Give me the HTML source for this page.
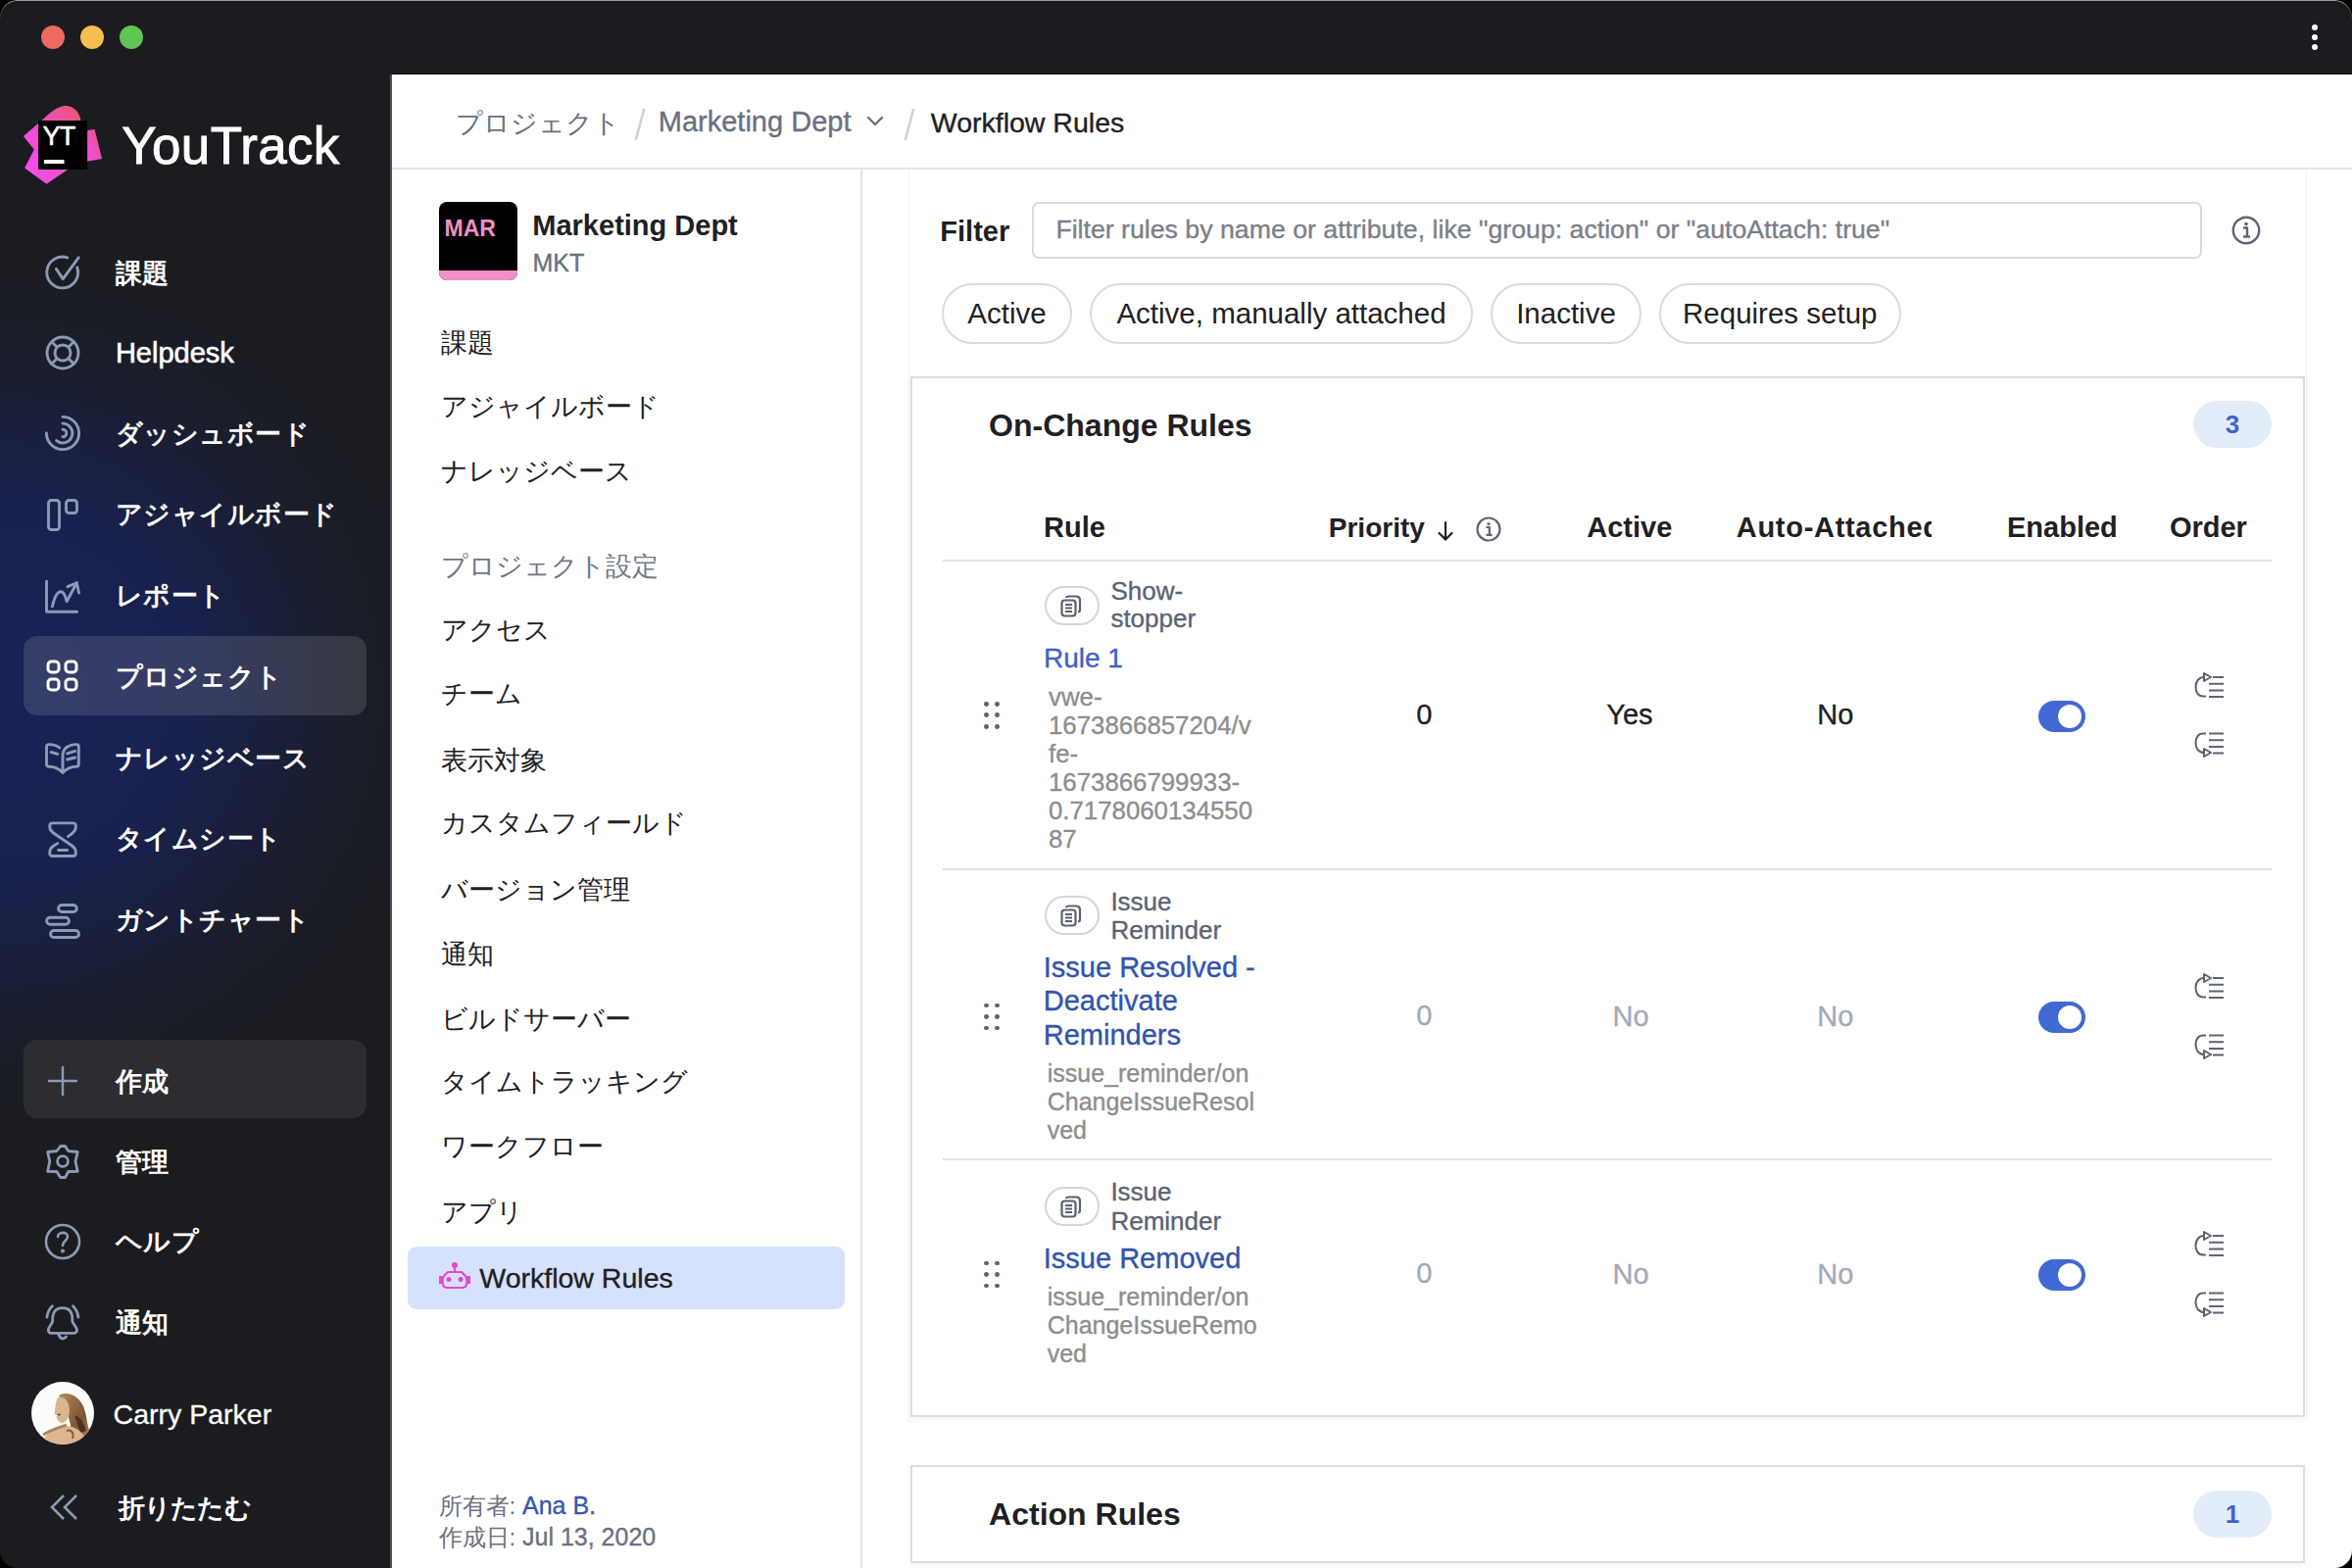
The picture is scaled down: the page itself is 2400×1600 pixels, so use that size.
<!DOCTYPE html><html><head><meta charset="utf-8"><style>
html,body{margin:0;padding:0;width:2400px;height:1600px;overflow:hidden;background:#000;}
body{font-family:"Liberation Sans",sans-serif;}
#win{position:absolute;left:0;top:0;width:2400px;height:1600px;border-radius:18px;overflow:hidden;background:#1b1c1f;}
.t{position:absolute;white-space:nowrap;}
.r{position:absolute;}
</style></head><body><div id="win">
<div class="r" style="left:0px;top:76px;width:400px;height:1524px;background:radial-gradient(ellipse 470px 460px at 0px 630px, rgba(24,34,86,1) 0%, rgba(24,34,84,0.88) 42%, rgba(26,30,54,0.4) 78%, rgba(27,28,31,0) 100%);"></div>
<div class="r" style="left:0px;top:0px;width:2400px;height:1600px;border-radius:18px;box-shadow:inset 0 1px 0 0 rgba(200,200,200,0.75);pointer-events:none;z-index:5;"></div>
<div class="r" style="left:42px;top:26px;width:24px;height:24px;border-radius:50%;background:#ee6a5e;"></div>
<div class="r" style="left:82px;top:26px;width:24px;height:24px;border-radius:50%;background:#f5be4f;"></div>
<div class="r" style="left:122px;top:26px;width:24px;height:24px;border-radius:50%;background:#61c554;"></div>
<div class="r" style="left:2359px;top:25px;width:6px;height:6px;border-radius:50%;background:#fff;"></div>
<div class="r" style="left:2359px;top:35px;width:6px;height:6px;border-radius:50%;background:#fff;"></div>
<div class="r" style="left:2359px;top:45px;width:6px;height:6px;border-radius:50%;background:#fff;"></div>
<svg class="r" style="left:20px;top:100px;" width="90" height="95" viewBox="0 0 90 95">
<defs><linearGradient id="lg" x1="0" y1="0.8" x2="1" y2="0.2"><stop offset="0" stop-color="#f64cf6"/><stop offset="0.6" stop-color="#ec50b8"/><stop offset="1" stop-color="#ea5676"/></linearGradient></defs>
<path d="M3.9 39 L23 22.4 C31 15 39 8.5 46 8 C54 7.5 61 13 62.5 23 L62 73 L49.2 73.1 L27.5 87.8 L5.2 71.5 L14.8 52.4 Z" fill="url(#lg)"/>
<path d="M62 33.9 L76.6 32 L84 62 L62 66 Z" fill="url(#lg)"/>
<rect x="19.1" y="23" width="50" height="50" fill="#000"/>
<text x="23.5" y="48" font-family="Liberation Sans" font-size="27" font-weight="400" fill="#fff" stroke="#fff" stroke-width="0.6" letter-spacing="-0.8">YT</text>
<rect x="24.9" y="63" width="20.6" height="4" fill="#fff"/>
</svg>
<div class="t" style="left:124.3px;top:122.0px;font-size:53px;line-height:53px;font-weight:400;color:#ffffff;letter-spacing:0.3px;-webkit-text-stroke:0.9px #fff;">YouTrack</div>
<div class="r" style="left:24px;top:649px;width:350px;height:81px;border-radius:14px;background:rgba(255,255,255,0.125);"></div>
<div class="r" style="left:24px;top:1061px;width:350px;height:80px;border-radius:14px;background:#2c2d31;"></div>
<div class="t" style="left:117.5px;top:265.6px;font-size:27px;line-height:27px;font-weight:700;color:#ffffff;letter-spacing:0.5px;">課題</div>
<div class="t" style="left:117.9px;top:345.9px;font-size:29px;line-height:29px;font-weight:400;color:#ffffff;-webkit-text-stroke:0.6px #fff;">Helpdesk</div>
<div class="t" style="left:117.5px;top:429.6px;font-size:27px;line-height:27px;font-weight:700;color:#ffffff;letter-spacing:0.5px;">ダッシュボード</div>
<div class="t" style="left:117.5px;top:512.1px;font-size:27px;line-height:27px;font-weight:700;color:#ffffff;letter-spacing:0.5px;">アジャイルボード</div>
<div class="t" style="left:117.5px;top:594.6px;font-size:27px;line-height:27px;font-weight:700;color:#ffffff;letter-spacing:0.5px;">レポート</div>
<div class="t" style="left:117.5px;top:678.1px;font-size:27px;line-height:27px;font-weight:700;color:#ffffff;letter-spacing:0.5px;">プロジェクト</div>
<div class="t" style="left:117.5px;top:760.6px;font-size:27px;line-height:27px;font-weight:700;color:#ffffff;letter-spacing:0.5px;">ナレッジベース</div>
<div class="t" style="left:117.5px;top:843.1px;font-size:27px;line-height:27px;font-weight:700;color:#ffffff;letter-spacing:0.5px;">タイムシート</div>
<div class="t" style="left:117.5px;top:926.1px;font-size:27px;line-height:27px;font-weight:700;color:#ffffff;letter-spacing:0.5px;">ガントチャート</div>
<div class="t" style="left:117.5px;top:1090.6px;font-size:27px;line-height:27px;font-weight:700;color:#ffffff;letter-spacing:0.5px;">作成</div>
<div class="t" style="left:117.5px;top:1173.1px;font-size:27px;line-height:27px;font-weight:700;color:#ffffff;letter-spacing:0.5px;">管理</div>
<div class="t" style="left:117.5px;top:1254.1px;font-size:27px;line-height:27px;font-weight:700;color:#ffffff;letter-spacing:0.5px;">ヘルプ</div>
<div class="t" style="left:117.5px;top:1336.6px;font-size:27px;line-height:27px;font-weight:700;color:#ffffff;letter-spacing:0.5px;">通知</div>
<svg class="r" style="left:44px;top:258px;" width="40" height="40" viewBox="0 0 40 40"><g fill="none" stroke="#8c9bb5" stroke-width="2.9" stroke-linecap="round" stroke-linejoin="round"><path d="M24.7 4.9 A15.9 15.9 0 1 0 34.7 14.8"/><path d="M13.4 16.4 L20.2 26.6 L36.2 4.8"/></g></svg>
<svg class="r" style="left:44px;top:340px;" width="40" height="40" viewBox="0 0 40 40"><g fill="none" stroke="#8c9bb5" stroke-width="2.9" stroke-linecap="round" stroke-linejoin="round"><circle cx="20" cy="20" r="16"/><circle cx="20" cy="20" r="8"/><path d="M14.3 14.3 L8.7 8.7 M25.7 14.3 L31.3 8.7 M14.3 25.7 L8.7 31.3 M25.7 25.7 L31.3 31.3"/></g></svg>
<svg class="r" style="left:44px;top:422px;" width="40" height="40" viewBox="0 0 40 40"><g fill="none" stroke="#8c9bb5" stroke-width="2.9" stroke-linecap="round" stroke-linejoin="round"><path d="M20 3.4 A16.6 16.6 0 1 1 3.4 20"/><path d="M20 10.1 A9.9 9.9 0 1 1 13.6 27.6"/><path d="M20 16.2 A3.8 3.8 0 1 1 20 23.8"/></g></svg>
<svg class="r" style="left:44px;top:504.5px;" width="40" height="40" viewBox="0 0 40 40"><g fill="none" stroke="#8c9bb5" stroke-width="2.9" stroke-linecap="round" stroke-linejoin="round"><rect x="5.5" y="5.5" width="11" height="30" rx="3"/><rect x="23.5" y="5.5" width="11" height="13" rx="3"/></g></svg>
<svg class="r" style="left:44px;top:588px;" width="40" height="40" viewBox="0 0 40 40"><g fill="none" stroke="#8c9bb5" stroke-width="2.9" stroke-linecap="round" stroke-linejoin="round"><path d="M3.5 5.2 L3.5 36.3 L34.6 36.3"/><path d="M9.4 30.8 C11 24 14 15.8 18 15.8 C22 15.8 23 22 24.1 25.7 L34.3 6.8"/><path d="M25 10.7 L34.3 6.8 L36.5 17"/></g></svg>
<svg class="r" style="left:44px;top:670px;" width="40" height="40" viewBox="0 0 40 40"><g fill="none" stroke="#ffffff" stroke-width="3" stroke-linecap="round" stroke-linejoin="round"><rect x="5" y="5" width="11" height="11" rx="3.5"/><rect x="23" y="5" width="11" height="11" rx="3.5"/><rect x="5" y="23" width="11" height="11" rx="3.5"/><rect x="23" y="23" width="11" height="11" rx="3.5"/></g></svg>
<svg class="r" style="left:44px;top:753px;" width="40" height="40" viewBox="0 0 40 40"><g fill="none" stroke="#8c9bb5" stroke-width="2.9" stroke-linecap="round" stroke-linejoin="round"><path d="M16.7 10 C14 7.7 9 6.6 6 6.6 C4.5 6.6 3.5 7.6 3.5 9 L3.5 27 C3.5 28.5 4.5 29.2 6 29.2 C11 29.2 16 31 20 35.6 C24 31 29 29.2 34 29.2 C35.5 29.2 36.3 28.5 36.3 27 L36.3 9 C36.3 7.6 35.5 6.6 34 6.6 C27 6.6 20 10 20 18 L20 33"/><path d="M8.1 14.5 L14.8 16.4 M24.6 15.9 L32.7 13.4 M24.6 22 L32.7 20"/></g></svg>
<svg class="r" style="left:44px;top:836px;" width="40" height="40" viewBox="0 0 40 40"><g fill="none" stroke="#8c9bb5" stroke-width="2.9" stroke-linecap="round" stroke-linejoin="round"><path d="M25.4 17.6 L29.5 14.5 C32 12.5 33.3 10.5 33.3 8 L33.3 6.5 C33.3 4.8 32.3 3.9 30.5 3.9 L9.6 3.9 C7.8 3.9 6.8 4.8 6.8 6.5 L6.8 8 C6.8 10.5 7.8 12 10.5 14 L29.5 27 C32 28.8 33.3 31 33.3 33.5 L33.3 34.8 C33.3 36.5 32.3 37.5 30.5 37.5 L9.6 37.5 C7.8 37.5 6.8 36.5 6.8 34.8 L6.8 33.5 C6.8 31 8 29 10.5 27.3 L14.7 24.6"/><path d="M15.5 31.5 L24.6 31.5"/></g></svg>
<svg class="r" style="left:44px;top:919px;" width="40" height="40" viewBox="0 0 40 40"><g fill="none" stroke="#8c9bb5" stroke-width="2.9" stroke-linecap="round" stroke-linejoin="round"><rect x="15.6" y="4.5" width="18.7" height="7" rx="3.5"/><rect x="3.6" y="17.3" width="22.8" height="7" rx="3.5"/><rect x="7.5" y="30.5" width="29" height="7" rx="3.5"/></g></svg>
<svg class="r" style="left:44px;top:1083px;" width="40" height="40" viewBox="0 0 40 40"><g fill="none" stroke="#8c9bb5" stroke-width="2.4" stroke-linecap="round" stroke-linejoin="round"><path d="M20 6 L20 34 M6 20 L34 20"/></g></svg>
<svg class="r" style="left:44px;top:1164.5px;" width="40" height="40" viewBox="0 0 40 40"><g fill="none" stroke="#8c9bb5" stroke-width="2.8" stroke-linecap="round" stroke-linejoin="round"><path d="M17.7 4.5 L22.5 4.5 L25.7 9.5 L35.2 10.5 L33 20.1 L35.2 30.3 L25.7 30.5 L22.5 36.5 L17.7 36.5 L13.9 30.5 L4.6 30.3 L6.8 20.1 L4.6 10.5 L13.9 9.5 Z"/><circle cx="20" cy="20" r="5.4"/></g></svg>
<svg class="r" style="left:44px;top:1246.5px;" width="40" height="40" viewBox="0 0 40 40"><g fill="none" stroke="#8c9bb5" stroke-width="2.6" stroke-linecap="round" stroke-linejoin="round"><circle cx="20" cy="20" r="17"/><path d="M15 15 C15 10 25 9 25 15 C25 19 20 19 20 24"/><circle cx="20" cy="29.5" r="0.8" fill="#8c9bb5"/></g></svg>
<svg class="r" style="left:44px;top:1329px;" width="40" height="40" viewBox="0 0 40 40"><g fill="none" stroke="#8c9bb5" stroke-width="2.8" stroke-linecap="round" stroke-linejoin="round"><path d="M9.7 17 C9.7 9 14 5.6 19.7 5.6 C25.5 5.6 29.8 9 29.8 17 L29.8 19 C29.8 21 34.5 25.5 34.5 28 C34.5 30 33 31.4 31 31.4 L8.5 31.4 C6.5 31.4 5.3 30 5.3 28 C5.3 25.5 9.7 21 9.7 19 Z"/><path d="M15.5 31.5 C16.5 35 18 37 20 37 C21.5 37 22.5 36 23.5 35"/><path d="M9.4 3.8 C6.5 6.5 4.5 10 3.9 15 M30.4 3.8 C33.3 6.5 35.3 10 35.9 15"/></g></svg>
<svg class="r" style="left:50px;top:1524px;" width="32" height="28" viewBox="0 0 32 28"><g fill="none" stroke="#8c9bb5" stroke-width="2.6"><path d="M15 2 L3 14 L15 26"/><path d="M28 2 L16 14 L28 26"/></g></svg>
<div class="t" style="left:120.5px;top:1526.1px;font-size:27px;line-height:27px;font-weight:700;color:#ffffff;letter-spacing:-0.7px;">折りたたむ</div>
<svg class="r" style="left:32px;top:1410px;" width="64" height="64" viewBox="0 0 64 64"><defs><clipPath id="av"><circle cx="32" cy="32" r="32"/></clipPath>
<linearGradient id="hair" x1="0" y1="0" x2="1" y2="1"><stop offset="0" stop-color="#b08a60"/><stop offset="0.6" stop-color="#7a5535"/><stop offset="1" stop-color="#c09060"/></linearGradient></defs>
<g clip-path="url(#av)"><rect width="64" height="64" fill="#fcfcfc"/>
<path d="M28 14 C34 10 44 12 50 20 C56 28 56 38 58 46 C60 52 63 58 61 64 L42 64 L40 44 C38 36 36 26 28 14 Z" fill="url(#hair)"/>
<path d="M44 34 C50 36 54 42 56 50 L50 52 C48 46 46 40 44 34 Z" fill="#4a3222"/>
<path d="M27 16 C33 14 39 20 39 29 C39 37 35 42 31 42 C27 41 25 37 26 34 L23.5 33 C24.5 29 24 22 27 16 Z" fill="#dcb48e"/>
<path d="M26 33 L30 32.5 L29 35 Z" fill="#6a3a2a"/>
<path d="M10 64 C14 52 24 45 34 45 C46 45 54 52 58 64 Z" fill="#dcb690"/>
<path d="M36 44 C30 46 20 49 12 54" stroke="#a88a58" stroke-width="3" fill="none"/>
<path d="M36 50 C40 48 44 52 42 58" stroke="#8a5a3a" stroke-width="2" fill="none"/>
</g></svg>
<div class="t" style="left:115.6px;top:1428.8px;font-size:28.5px;line-height:28.5px;font-weight:400;color:#ffffff;-webkit-text-stroke:0.3px #fff;">Carry Parker</div>
<div class="r" style="left:398px;top:76px;width:2px;height:1524px;background:#4e5056;"></div>
<div class="r" style="left:400px;top:76px;width:2000px;height:1524px;background:#ffffff;"></div>
<div class="r" style="left:400px;top:75px;width:2000px;height:1px;background:#08090c;"></div>
<div class="r" style="left:400px;top:171px;width:2000px;height:2px;background:#e3e4e8;"></div>
<div class="r" style="left:878px;top:173px;width:2px;height:1427px;background:#e3e4e8;"></div>
<div class="r" style="left:927px;top:173px;width:1px;height:1278px;background:#f5f5f7;"></div>
<div class="r" style="left:2353px;top:173px;width:1px;height:1278px;background:#f3f3f5;"></div>
<div class="t" style="left:465.0px;top:112.6px;font-size:27px;line-height:27px;font-weight:400;color:#6b7080;">プロジェクト</div>
<svg class="r" style="left:645px;top:110px;" width="16" height="34" viewBox="0 0 16 34"><path d="M12 2 L4 32" stroke="#d0d2d8" stroke-width="2.6" stroke-linecap="round"/></svg>
<div class="t" style="left:671.8px;top:110.3px;font-size:29px;line-height:29px;font-weight:400;color:#6b7080;-webkit-text-stroke:0.35px #6b7080;">Marketing Dept</div>
<svg class="r" style="left:883px;top:116px;" width="20" height="16" viewBox="0 0 20 16"><path d="M3 4 L10 11 L17 4" fill="none" stroke="#6b7080" stroke-width="2.4" stroke-linecap="round" stroke-linejoin="round"/></svg>
<svg class="r" style="left:920px;top:110px;" width="16" height="34" viewBox="0 0 16 34"><path d="M12 2 L4 32" stroke="#d0d2d8" stroke-width="2.6" stroke-linecap="round"/></svg>
<div class="t" style="left:949.8px;top:110.8px;font-size:28.5px;line-height:28.5px;font-weight:400;color:#1f2023;-webkit-text-stroke:0.35px #1f2023;">Workflow Rules</div>
<div class="r" style="left:448px;top:206px;width:80px;height:80px;border-radius:8px;background:#000;overflow:hidden;"></div>
<div class="r" style="left:448px;top:276px;width:80px;height:10px;border-radius:0 0 8px 8px;background:#f090c6;"></div>
<div class="t" style="left:453.6px;top:221.6px;font-size:23px;line-height:23px;font-weight:700;color:#f090c6;">MAR</div>
<div class="t" style="left:543.3px;top:216.3px;font-size:29px;line-height:29px;font-weight:700;color:#1f2023;">Marketing Dept</div>
<div class="t" style="left:543.5px;top:255.8px;font-size:25px;line-height:25px;font-weight:400;color:#6b7080;-webkit-text-stroke:0.35px #6b7080;">MKT</div>
<div class="t" style="left:449.5px;top:337.1px;font-size:27px;line-height:27px;font-weight:400;color:#1f2023;">課題</div>
<div class="t" style="left:449.5px;top:402.1px;font-size:27px;line-height:27px;font-weight:400;color:#1f2023;">アジャイルボード</div>
<div class="t" style="left:449.5px;top:468.0px;font-size:27px;line-height:27px;font-weight:400;color:#1f2023;">ナレッジベース</div>
<div class="t" style="left:449.5px;top:564.6px;font-size:27px;line-height:27px;font-weight:400;color:#737785;">プロジェクト設定</div>
<div class="t" style="left:449.5px;top:629.6px;font-size:27px;line-height:27px;font-weight:400;color:#1f2023;">アクセス</div>
<div class="t" style="left:449.5px;top:695.1px;font-size:27px;line-height:27px;font-weight:400;color:#1f2023;">チーム</div>
<div class="t" style="left:449.5px;top:763.0px;font-size:27px;line-height:27px;font-weight:400;color:#1f2023;">表示対象</div>
<div class="t" style="left:449.5px;top:826.9px;font-size:27px;line-height:27px;font-weight:400;color:#1f2023;">カスタムフィールド</div>
<div class="t" style="left:449.5px;top:895.1px;font-size:27px;line-height:27px;font-weight:400;color:#1f2023;">バージョン管理</div>
<div class="t" style="left:449.5px;top:961.2px;font-size:27px;line-height:27px;font-weight:400;color:#1f2023;">通知</div>
<div class="t" style="left:449.5px;top:1026.6px;font-size:27px;line-height:27px;font-weight:400;color:#1f2023;">ビルドサーバー</div>
<div class="t" style="left:449.5px;top:1090.6px;font-size:27px;line-height:27px;font-weight:400;color:#1f2023;">タイムトラッキング</div>
<div class="t" style="left:449.5px;top:1157.1px;font-size:27px;line-height:27px;font-weight:400;color:#1f2023;">ワークフロー</div>
<div class="t" style="left:449.5px;top:1223.6px;font-size:27px;line-height:27px;font-weight:400;color:#1f2023;">アプリ</div>
<div class="r" style="left:416px;top:1272px;width:446px;height:64px;border-radius:9px;background:#d6e2fb;"></div>
<svg class="r" style="left:446px;top:1286px;" width="36" height="30" viewBox="0 0 36 30"><g fill="none" stroke="#e645d8" stroke-width="2.2">
<path d="M11 12 L25 12 L29 16 C31 19 31 24 29 27 L26 28 L10 28 L7 27 C5 24 5 19 7 16 Z" stroke-linejoin="round"/>
<path d="M18 5 L18 12"/></g>
<g fill="#e645d8"><circle cx="18" cy="5" r="3"/><circle cx="12" cy="19.5" r="2.5"/><circle cx="24" cy="19.5" r="2.5"/>
<rect x="2" y="16" width="4" height="8"/><rect x="30" y="16" width="4" height="8"/></g></svg>
<div class="t" style="left:489.3px;top:1289.8px;font-size:28.5px;line-height:28.5px;font-weight:400;color:#1f2023;-webkit-text-stroke:0.35px #1f2023;">Workflow Rules</div>
<div class="t" style="left:447.5px;top:1524.5px;font-size:24px;line-height:24px;font-weight:400;color:#6d7180;">所有者:</div>
<div class="t" style="left:533.0px;top:1523.8px;font-size:25px;line-height:25px;font-weight:400;color:#3656b0;-webkit-text-stroke:0.35px #3656b0;">Ana B.</div>
<div class="t" style="left:447.5px;top:1556.5px;font-size:24px;line-height:24px;font-weight:400;color:#6d7180;">作成日:</div>
<div class="t" style="left:533.0px;top:1555.8px;font-size:25px;line-height:25px;font-weight:400;color:#6d7180;-webkit-text-stroke:0.35px #6d7180;">Jul 13, 2020</div>
<div class="t" style="left:959.3px;top:221.5px;font-size:29px;line-height:29px;font-weight:700;color:#1f2023;">Filter</div>
<div class="r" style="left:1053px;top:206px;width:1194px;height:58px;box-sizing:border-box;border:2px solid #d8dade;border-radius:7px;background:#fff;"></div>
<div class="t" style="left:1077.4px;top:221.3px;font-size:26.7px;line-height:26.7px;font-weight:400;color:#7c7f88;-webkit-text-stroke:0.35px #7c7f88;">Filter rules by name or attribute, like &quot;group: action&quot; or &quot;autoAttach: true&quot;</div>
<svg class="r" style="left:2276px;top:219px;" width="32" height="32" viewBox="0 0 32 32"><circle cx="16" cy="16" r="13.2" fill="none" stroke="#5f6472" stroke-width="2.4"/><circle cx="16" cy="9.6" r="1.8" fill="#5f6472"/><path d="M13 13.5 L17 13.5 L17 22 M13 22.5 L20 22.5" fill="none" stroke="#5f6472" stroke-width="2.4"/></svg>
<div class="r" style="left:961px;top:289px;width:133px;height:62px;box-sizing:border-box;border:2px solid #dadbe0;border-radius:31px;background:#fff;"></div>
<div class="t" style="left:961px;top:289px;width:133px;height:62px;line-height:62px;text-align:center;font-size:29.5px;color:#1f2023">Active</div>
<div class="r" style="left:1112px;top:289px;width:391px;height:62px;box-sizing:border-box;border:2px solid #dadbe0;border-radius:31px;background:#fff;"></div>
<div class="t" style="left:1112px;top:289px;width:391px;height:62px;line-height:62px;text-align:center;font-size:29.5px;color:#1f2023">Active, manually attached</div>
<div class="r" style="left:1521px;top:289px;width:154px;height:62px;box-sizing:border-box;border:2px solid #dadbe0;border-radius:31px;background:#fff;"></div>
<div class="t" style="left:1521px;top:289px;width:154px;height:62px;line-height:62px;text-align:center;font-size:29.5px;color:#1f2023">Inactive</div>
<div class="r" style="left:1692.5px;top:289px;width:247.5px;height:62px;box-sizing:border-box;border:2px solid #dadbe0;border-radius:31px;background:#fff;"></div>
<div class="t" style="left:1692.5px;top:289px;width:247.5px;height:62px;line-height:62px;text-align:center;font-size:29.5px;color:#1f2023">Requires setup</div>
<div class="r" style="left:929px;top:384px;width:1423px;height:1062px;box-sizing:border-box;border:2px solid #dcdde2;background:#fff;box-shadow:0 2px 8px rgba(0,0,0,0.05);"></div>
<div class="t" style="left:1009.1px;top:417.8px;font-size:32px;line-height:32px;font-weight:700;color:#1f2023;">On-Change Rules</div>
<div class="r" style="left:2238px;top:409px;width:80px;height:48px;border-radius:24px;background:#e3ecf9;"></div>
<div class="t" style="left:2238px;top:409px;width:80px;height:48px;line-height:48px;text-align:center;font-size:26px;font-weight:700;color:#3d64cc">3</div>
<div class="t" style="left:1065.0px;top:523.8px;font-size:29px;line-height:29px;font-weight:700;color:#1f2023;">Rule</div>
<div class="t" style="left:1355.8px;top:524.6px;font-size:28px;line-height:28px;font-weight:700;color:#1f2023;">Priority</div>
<svg class="r" style="left:1462px;top:530px;" width="26" height="24" viewBox="0 0 26 24"><path d="M13 3 L13 20 M6.5 14 L13 20.5 L19.5 14" fill="none" stroke="#1f2023" stroke-width="2.2" stroke-linecap="round"/></svg>
<svg class="r" style="left:1505px;top:526px;" width="28" height="28" viewBox="0 0 28 28"><circle cx="14" cy="14" r="11.5" fill="none" stroke="#5f6472" stroke-width="2.2"/><circle cx="14" cy="8.5" r="1.6" fill="#5f6472"/><path d="M11.5 12 L14.8 12 L14.8 19.5 M11.5 19.8 L17.5 19.8" fill="none" stroke="#5f6472" stroke-width="2.2"/></svg>
<div class="t" style="left:1619.3px;top:523.8px;font-size:29px;line-height:29px;font-weight:700;color:#1f2023;">Active</div>
<div class="t" style="left:1771.8px;top:523.75px;width:199px;overflow:hidden;font-size:29px;line-height:29px;font-weight:700;letter-spacing:0.7px;color:#1f2023">Auto-Attached</div>
<div class="t" style="left:2048.0px;top:523.8px;font-size:29px;line-height:29px;font-weight:700;color:#1f2023;">Enabled</div>
<div class="t" style="left:2213.9px;top:523.8px;font-size:29px;line-height:29px;font-weight:700;color:#1f2023;">Order</div>
<div class="r" style="left:962px;top:571px;width:1356px;height:2px;background:#e1e2e7;"></div>
<div class="r" style="left:962px;top:886px;width:1356px;height:2px;background:#e1e2e7;"></div>
<div class="r" style="left:962px;top:1182px;width:1356px;height:2px;background:#e1e2e7;"></div>
<div class="r" style="left:1004.1px;top:716.0px;width:4.8px;height:4.8px;border-radius:50%;background:#5d6372;"></div>
<div class="r" style="left:1004.1px;top:727.4px;width:4.8px;height:4.8px;border-radius:50%;background:#5d6372;"></div>
<div class="r" style="left:1004.1px;top:738.8px;width:4.8px;height:4.8px;border-radius:50%;background:#5d6372;"></div>
<div class="r" style="left:1015.1px;top:716.0px;width:4.8px;height:4.8px;border-radius:50%;background:#5d6372;"></div>
<div class="r" style="left:1015.1px;top:727.4px;width:4.8px;height:4.8px;border-radius:50%;background:#5d6372;"></div>
<div class="r" style="left:1015.1px;top:738.8px;width:4.8px;height:4.8px;border-radius:50%;background:#5d6372;"></div>
<div class="r" style="left:1066px;top:598px;width:56px;height:40px;box-sizing:border-box;border:2px solid #d5d6dc;border-radius:20px;background:#fff;"></div>
<svg class="r" style="left:1081px;top:607px;" width="26" height="24" viewBox="0 0 26 24"><g fill="none" stroke="#5a6070" stroke-width="2.2"><rect x="2.5" y="5.5" width="14" height="16" rx="3"/><path d="M7 3 C7 1.5 8 1.5 10 1.5 L17 1.5 C20 1.5 21 2.5 21 5.5 L21 15 C21 17 20 17.5 19 17.5"/><path d="M6 10 L13 10 M6 13.5 L13 13.5 M6 17 L13 17"/></g></svg>
<div class="t" style="left:1133.4px;top:589.9px;font-size:26px;line-height:26px;font-weight:400;color:#5d6373;-webkit-text-stroke:0.35px #5d6373;">Show-</div>
<div class="t" style="left:1133.4px;top:618.4px;font-size:26px;line-height:26px;font-weight:400;color:#5d6373;-webkit-text-stroke:0.35px #5d6373;">stopper</div>
<div class="t" style="left:1065.0px;top:657.7px;font-size:28px;line-height:28px;font-weight:400;color:#3d62c8;-webkit-text-stroke:0.35px #3d62c8;">Rule 1</div>
<div class="t" style="left:1070.0px;top:699.2px;font-size:25.8px;line-height:25.8px;font-weight:400;color:#8e8e8e;-webkit-text-stroke:0.35px #8e8e8e;">vwe-</div>
<div class="t" style="left:1070.0px;top:728.1px;font-size:25.8px;line-height:25.8px;font-weight:400;color:#8e8e8e;-webkit-text-stroke:0.35px #8e8e8e;">1673866857204/v</div>
<div class="t" style="left:1070.0px;top:757.0px;font-size:25.8px;line-height:25.8px;font-weight:400;color:#8e8e8e;-webkit-text-stroke:0.35px #8e8e8e;">fe-</div>
<div class="t" style="left:1070.0px;top:785.9px;font-size:25.8px;line-height:25.8px;font-weight:400;color:#8e8e8e;-webkit-text-stroke:0.35px #8e8e8e;">1673866799933-</div>
<div class="t" style="left:1070.0px;top:814.8px;font-size:25.8px;line-height:25.8px;font-weight:400;color:#8e8e8e;-webkit-text-stroke:0.35px #8e8e8e;">0.7178060134550</div>
<div class="t" style="left:1070.0px;top:843.7px;font-size:25.8px;line-height:25.8px;font-weight:400;color:#8e8e8e;-webkit-text-stroke:0.35px #8e8e8e;">87</div>
<div class="t" style="left:1445.3px;top:715.1px;font-size:29px;line-height:29px;font-weight:400;color:#1f2023;-webkit-text-stroke:0.35px #1f2023;">0</div>
<div class="t" style="left:1639.3px;top:714.9px;font-size:29px;line-height:29px;font-weight:400;color:#1f2023;-webkit-text-stroke:0.35px #1f2023;">Yes</div>
<div class="t" style="left:1854.3px;top:714.9px;font-size:29px;line-height:29px;font-weight:400;color:#1f2023;-webkit-text-stroke:0.35px #1f2023;">No</div>
<div class="r" style="left:2080px;top:715px;width:48px;height:32px;border-radius:16px;background:#4169d3;"></div>
<div class="r" style="left:2100px;top:719px;width:24px;height:24px;border-radius:50%;background:#fff;"></div>
<svg class="r" style="left:2236px;top:686px;" width="38" height="28" viewBox="0 0 38 28"><g fill="none" stroke="#5e6370" stroke-width="2"><path d="M15 24.5 L12 24.5 C7 24.5 4.5 20 4.5 15 C4.5 9 8 5 13 5"/><path d="M13 1 L20 5 L13 9 Z" stroke-linejoin="round"/><path d="M22 5 L33 5 M18 11.7 L33 11.7 M18 18.4 L33 18.4 M18 25 L33 25"/></g></svg>
<svg class="r" style="left:2236px;top:745px;" width="38" height="28" viewBox="0 0 38 28"><g fill="none" stroke="#5e6370" stroke-width="2"><path d="M15 3.5 L12 3.5 C7 3.5 4.5 8 4.5 13 C4.5 19 8 23 13 23"/><path d="M13 19 L20 23 L13 27 Z" stroke-linejoin="round"/><path d="M18 3.5 L33 3.5 M18 10.2 L33 10.2 M18 16.9 L33 16.9 M22 23.5 L33 23.5"/></g></svg>
<div class="r" style="left:1004.1px;top:1023.6999999999999px;width:4.8px;height:4.8px;border-radius:50%;background:#5d6372;"></div>
<div class="r" style="left:1004.1px;top:1035.1px;width:4.8px;height:4.8px;border-radius:50%;background:#5d6372;"></div>
<div class="r" style="left:1004.1px;top:1046.5px;width:4.8px;height:4.8px;border-radius:50%;background:#5d6372;"></div>
<div class="r" style="left:1015.1px;top:1023.6999999999999px;width:4.8px;height:4.8px;border-radius:50%;background:#5d6372;"></div>
<div class="r" style="left:1015.1px;top:1035.1px;width:4.8px;height:4.8px;border-radius:50%;background:#5d6372;"></div>
<div class="r" style="left:1015.1px;top:1046.5px;width:4.8px;height:4.8px;border-radius:50%;background:#5d6372;"></div>
<div class="r" style="left:1066px;top:914px;width:56px;height:40px;box-sizing:border-box;border:2px solid #d5d6dc;border-radius:20px;background:#fff;"></div>
<svg class="r" style="left:1081px;top:923px;" width="26" height="24" viewBox="0 0 26 24"><g fill="none" stroke="#5a6070" stroke-width="2.2"><rect x="2.5" y="5.5" width="14" height="16" rx="3"/><path d="M7 3 C7 1.5 8 1.5 10 1.5 L17 1.5 C20 1.5 21 2.5 21 5.5 L21 15 C21 17 20 17.5 19 17.5"/><path d="M6 10 L13 10 M6 13.5 L13 13.5 M6 17 L13 17"/></g></svg>
<div class="t" style="left:1133.4px;top:906.9px;font-size:26px;line-height:26px;font-weight:400;color:#5d6373;-webkit-text-stroke:0.35px #5d6373;">Issue</div>
<div class="t" style="left:1133.4px;top:935.9px;font-size:26px;line-height:26px;font-weight:400;color:#5d6373;-webkit-text-stroke:0.35px #5d6373;">Reminder</div>
<div class="t" style="left:1064.8px;top:973.1px;font-size:29px;line-height:29px;font-weight:400;color:#3254ab;-webkit-text-stroke:0.35px #3254ab;">Issue Resolved -</div>
<div class="t" style="left:1064.8px;top:1007.4px;font-size:29px;line-height:29px;font-weight:400;color:#3254ab;-webkit-text-stroke:0.35px #3254ab;">Deactivate</div>
<div class="t" style="left:1064.8px;top:1041.6px;font-size:29px;line-height:29px;font-weight:400;color:#3254ab;-webkit-text-stroke:0.35px #3254ab;">Reminders</div>
<div class="t" style="left:1068.7px;top:1083.2px;font-size:25px;line-height:25px;font-weight:400;color:#8e8e8e;-webkit-text-stroke:0.35px #8e8e8e;">issue_reminder/on</div>
<div class="t" style="left:1068.7px;top:1112.0px;font-size:25px;line-height:25px;font-weight:400;color:#8e8e8e;-webkit-text-stroke:0.35px #8e8e8e;">ChangeIssueResol</div>
<div class="t" style="left:1068.7px;top:1140.7px;font-size:25px;line-height:25px;font-weight:400;color:#8e8e8e;-webkit-text-stroke:0.35px #8e8e8e;">ved</div>
<div class="t" style="left:1445.3px;top:1022.1px;font-size:29px;line-height:29px;font-weight:400;color:#a5aab8;-webkit-text-stroke:0.35px #a5aab8;">0</div>
<div class="t" style="left:1645.5px;top:1022.6px;font-size:29px;line-height:29px;font-weight:400;color:#a5aab8;-webkit-text-stroke:0.35px #a5aab8;">No</div>
<div class="t" style="left:1854.3px;top:1022.6px;font-size:29px;line-height:29px;font-weight:400;color:#a5aab8;-webkit-text-stroke:0.35px #a5aab8;">No</div>
<div class="r" style="left:2080px;top:1022px;width:48px;height:32px;border-radius:16px;background:#4169d3;"></div>
<div class="r" style="left:2100px;top:1026px;width:24px;height:24px;border-radius:50%;background:#fff;"></div>
<svg class="r" style="left:2236px;top:993px;" width="38" height="28" viewBox="0 0 38 28"><g fill="none" stroke="#5e6370" stroke-width="2"><path d="M15 24.5 L12 24.5 C7 24.5 4.5 20 4.5 15 C4.5 9 8 5 13 5"/><path d="M13 1 L20 5 L13 9 Z" stroke-linejoin="round"/><path d="M22 5 L33 5 M18 11.7 L33 11.7 M18 18.4 L33 18.4 M18 25 L33 25"/></g></svg>
<svg class="r" style="left:2236px;top:1053px;" width="38" height="28" viewBox="0 0 38 28"><g fill="none" stroke="#5e6370" stroke-width="2"><path d="M15 3.5 L12 3.5 C7 3.5 4.5 8 4.5 13 C4.5 19 8 23 13 23"/><path d="M13 19 L20 23 L13 27 Z" stroke-linejoin="round"/><path d="M18 3.5 L33 3.5 M18 10.2 L33 10.2 M18 16.9 L33 16.9 M22 23.5 L33 23.5"/></g></svg>
<div class="r" style="left:1004.1px;top:1286.6999999999998px;width:4.8px;height:4.8px;border-radius:50%;background:#5d6372;"></div>
<div class="r" style="left:1004.1px;top:1298.1px;width:4.8px;height:4.8px;border-radius:50%;background:#5d6372;"></div>
<div class="r" style="left:1004.1px;top:1309.5px;width:4.8px;height:4.8px;border-radius:50%;background:#5d6372;"></div>
<div class="r" style="left:1015.1px;top:1286.6999999999998px;width:4.8px;height:4.8px;border-radius:50%;background:#5d6372;"></div>
<div class="r" style="left:1015.1px;top:1298.1px;width:4.8px;height:4.8px;border-radius:50%;background:#5d6372;"></div>
<div class="r" style="left:1015.1px;top:1309.5px;width:4.8px;height:4.8px;border-radius:50%;background:#5d6372;"></div>
<div class="r" style="left:1066px;top:1211px;width:56px;height:40px;box-sizing:border-box;border:2px solid #d5d6dc;border-radius:20px;background:#fff;"></div>
<svg class="r" style="left:1081px;top:1220px;" width="26" height="24" viewBox="0 0 26 24"><g fill="none" stroke="#5a6070" stroke-width="2.2"><rect x="2.5" y="5.5" width="14" height="16" rx="3"/><path d="M7 3 C7 1.5 8 1.5 10 1.5 L17 1.5 C20 1.5 21 2.5 21 5.5 L21 15 C21 17 20 17.5 19 17.5"/><path d="M6 10 L13 10 M6 13.5 L13 13.5 M6 17 L13 17"/></g></svg>
<div class="t" style="left:1133.4px;top:1203.4px;font-size:26px;line-height:26px;font-weight:400;color:#5d6373;-webkit-text-stroke:0.35px #5d6373;">Issue</div>
<div class="t" style="left:1133.4px;top:1232.6px;font-size:26px;line-height:26px;font-weight:400;color:#5d6373;-webkit-text-stroke:0.35px #5d6373;">Reminder</div>
<div class="t" style="left:1064.8px;top:1270.3px;font-size:29px;line-height:29px;font-weight:400;color:#3254ab;-webkit-text-stroke:0.35px #3254ab;">Issue Removed</div>
<div class="t" style="left:1068.7px;top:1311.3px;font-size:25px;line-height:25px;font-weight:400;color:#8e8e8e;-webkit-text-stroke:0.35px #8e8e8e;">issue_reminder/on</div>
<div class="t" style="left:1068.7px;top:1340.2px;font-size:25px;line-height:25px;font-weight:400;color:#8e8e8e;-webkit-text-stroke:0.35px #8e8e8e;">ChangeIssueRemo</div>
<div class="t" style="left:1068.7px;top:1369.1px;font-size:25px;line-height:25px;font-weight:400;color:#8e8e8e;-webkit-text-stroke:0.35px #8e8e8e;">ved</div>
<div class="t" style="left:1445.3px;top:1285.3px;font-size:29px;line-height:29px;font-weight:400;color:#a5aab8;-webkit-text-stroke:0.35px #a5aab8;">0</div>
<div class="t" style="left:1645.5px;top:1285.8px;font-size:29px;line-height:29px;font-weight:400;color:#a5aab8;-webkit-text-stroke:0.35px #a5aab8;">No</div>
<div class="t" style="left:1854.3px;top:1285.8px;font-size:29px;line-height:29px;font-weight:400;color:#a5aab8;-webkit-text-stroke:0.35px #a5aab8;">No</div>
<div class="r" style="left:2080px;top:1285px;width:48px;height:32px;border-radius:16px;background:#4169d3;"></div>
<div class="r" style="left:2100px;top:1289px;width:24px;height:24px;border-radius:50%;background:#fff;"></div>
<svg class="r" style="left:2236px;top:1256px;" width="38" height="28" viewBox="0 0 38 28"><g fill="none" stroke="#5e6370" stroke-width="2"><path d="M15 24.5 L12 24.5 C7 24.5 4.5 20 4.5 15 C4.5 9 8 5 13 5"/><path d="M13 1 L20 5 L13 9 Z" stroke-linejoin="round"/><path d="M22 5 L33 5 M18 11.7 L33 11.7 M18 18.4 L33 18.4 M18 25 L33 25"/></g></svg>
<svg class="r" style="left:2236px;top:1316px;" width="38" height="28" viewBox="0 0 38 28"><g fill="none" stroke="#5e6370" stroke-width="2"><path d="M15 3.5 L12 3.5 C7 3.5 4.5 8 4.5 13 C4.5 19 8 23 13 23"/><path d="M13 19 L20 23 L13 27 Z" stroke-linejoin="round"/><path d="M18 3.5 L33 3.5 M18 10.2 L33 10.2 M18 16.9 L33 16.9 M22 23.5 L33 23.5"/></g></svg>
<div class="r" style="left:929px;top:1495px;width:1423px;height:100px;box-sizing:border-box;border:2px solid #dcdde2;background:#fff;box-shadow:0 2px 8px rgba(0,0,0,0.05);"></div>
<div class="t" style="left:1009.1px;top:1528.8px;font-size:32px;line-height:32px;font-weight:700;color:#1f2023;">Action Rules</div>
<div class="r" style="left:2238px;top:1521px;width:80px;height:48px;border-radius:24px;background:#e3ecf9;"></div>
<div class="t" style="left:2238px;top:1521px;width:80px;height:48px;line-height:48px;text-align:center;font-size:26px;font-weight:700;color:#3d64cc">1</div>
</div></body></html>
